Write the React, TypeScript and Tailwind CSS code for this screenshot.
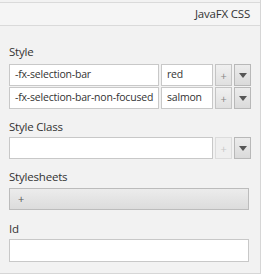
import React from "react";

const font = { fontFamily: '"Open Sans", "Noto Sans", sans-serif' };

function Tri() {
  return (
    <svg width="8" height="5" viewBox="0 0 8 5">
      <path d="M0 0 H8 L4 5 Z" fill="#555" />
    </svg>
  );
}

function PlusBtn({ disabled }: { disabled?: boolean }) {
  return (
    <div
      className={
        disabled
          ? "w-[17px] h-full flex items-center justify-center border border-[#dcdcdc] bg-[#efefef] text-[#c8c8c8] text-[11px] leading-none"
          : "w-[17px] h-full flex items-center justify-center border border-[#c4c4c4] bg-gradient-to-b from-[#f0f0f0] to-[#e0e0e0] text-[#888] text-[11px] leading-none"
      }
    >
      +
    </div>
  );
}

function DropBtn() {
  return (
    <div className="w-[17px] h-full flex items-center justify-center border border-[#b8b8b8] bg-gradient-to-b from-[#ececec] to-[#dadada]">
      <Tri />
    </div>
  );
}

function Field({ text, w }: { text?: string; w: string }) {
  return (
    <div className={`${w} h-full bg-white border border-[#c8c8c8] flex items-center pl-[5px] text-[10.5px] tracking-[-0.2px] text-[#333] whitespace-nowrap overflow-hidden`}>
      {text}
    </div>
  );
}

export default function App() {
  return (
    <div className="w-[263px] h-[277px] bg-white" style={font}>
      <div className="w-[261px] h-[274px] bg-[#f2f2f2] border-r border-b border-[#d6d6d6] flex flex-col">
        <div className="mt-[2px] h-[24px] border-t border-b border-[#dadada] bg-[#f5f5f5] flex items-center justify-end pr-[10px] text-[11.5px] tracking-[-0.2px] text-[#333]">
          JavaFX CSS
        </div>
        <div className="pl-[9px] flex flex-col text-[11.5px] tracking-[-0.2px] text-[#333]">
          <div className="mt-[18px] h-[16px] leading-[16px]">Style</div>
          <div className="mt-[4px] flex flex-col gap-[1px]">
            <div className="h-[22px] flex gap-[2px]">
              <Field text="-fx-selection-bar" w="w-[150px]" />
              <Field text="red" w="w-[52px]" />
              <PlusBtn />
              <DropBtn />
            </div>
            <div className="h-[22px] flex gap-[2px]">
              <Field text="-fx-selection-bar-non-focused" w="w-[150px]" />
              <Field text="salmon" w="w-[52px]" />
              <PlusBtn />
              <DropBtn />
            </div>
          </div>
          <div className="mt-[10px] h-[16px] leading-[16px]">Style Class</div>
          <div className="mt-[2px] h-[22px] flex gap-[2px]">
            <Field w="w-[204px]" />
            <PlusBtn disabled />
            <DropBtn />
          </div>
          <div className="mt-[10px] h-[16px] leading-[16px]">Stylesheets</div>
          <div className="mt-[3px] h-[22px] w-[240px] border border-[#bcbcbc] bg-gradient-to-b from-[#ececec] to-[#dcdcdc] flex items-center pl-[8px] text-[11px] text-[#555]">
            +
          </div>
          <div className="mt-[11px] h-[16px] leading-[16px]">Id</div>
          <div className="mt-[2px] h-[23px] w-[240px] bg-white border border-[#c8c8c8]" />
        </div>
      </div>
    </div>
  );
}
